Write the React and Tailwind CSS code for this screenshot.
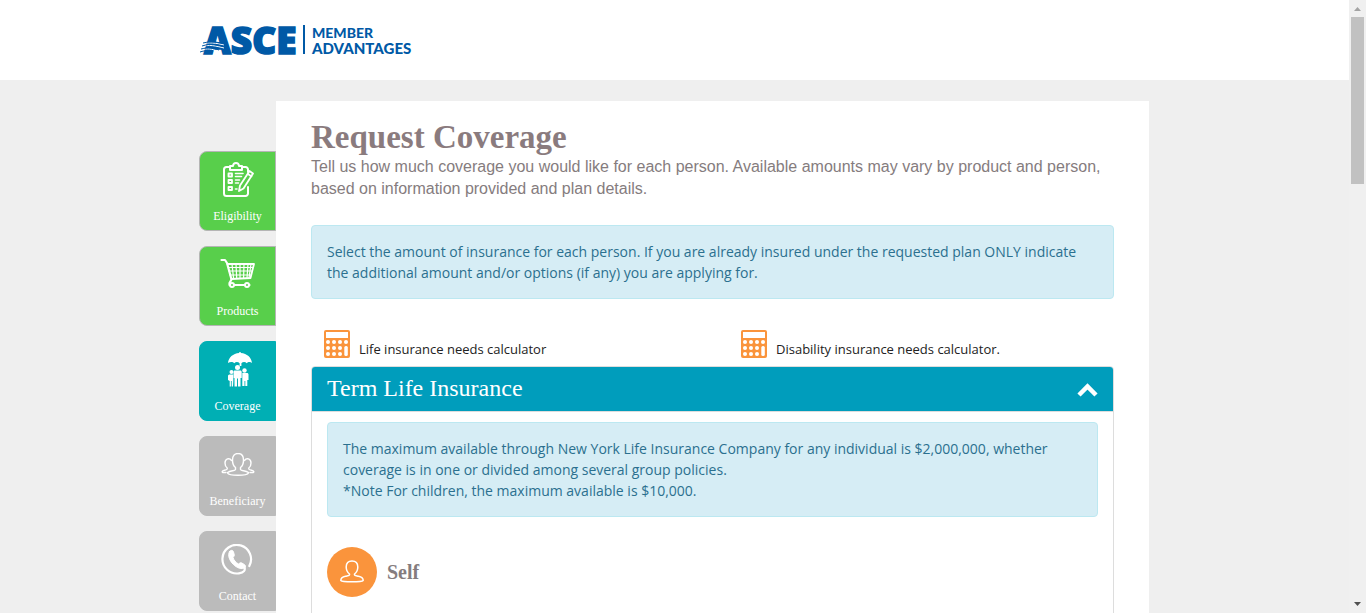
import React from "react";

function Logo() {
  return (
    <a href="#home" aria-label="ASCE Member Advantages" className="block">
      <svg width="220" height="56" viewBox="0 0 220 56" fill="#0059a6" className="block">
        <text x="5" y="43" fontFamily="'Open Sans', sans-serif" fontWeight="800" fontSize="37" stroke="#0059a6" strokeWidth="1.600">ASCE</text>
        <g fill="none" stroke="#fff" strokeWidth="1">
          <path d="M1 33c9-2 16-1 24 1" />
          <path d="M1 36c9-3 16-1 24 1" />
          <path d="M1 39c8-2 12-1 17 1" />
        </g>
        <g fill="none" stroke="#0059a6" strokeWidth="1">
          <path d="M4 32c9-2 14-1 22 1" />
          <path d="M3 35c9-3 16-1 24 1" />
          <path d="M2 38c8-2 12-1 18 1" />
          <path d="M1 41c6-2 8-1 12 1" />
        </g>
        <path d="M104 14h2v29h-2z" />
        <text x="113" y="27" fontFamily="Lato, sans-serif" fontWeight="900" fontSize="14">MEMBER</text>
        <text x="113" y="43" fontFamily="Lato, sans-serif" fontWeight="900" fontSize="15">ADVANTAGES</text>
      </svg>
    </a>
  );
}

function EligibilityIcon() {
  return (
    <svg width="32" height="36" viewBox="0 1 32 36" fill="none" stroke="#fff" strokeWidth="2" strokeLinejoin="round" strokeLinecap="round">
      <path d="M8 6H4.500A2.500 2.500 0 0 0 2 8.500V32.500A2.500 2.500 0 0 0 4.500 35h19a2.500 2.500 0 0 0 2.500-2.500V26M20 6h3.500A2.500 2.500 0 0 1 26 8.500V11" />
      <path d="M8 9V5h3c.3-4 5.700-4 6 0h3v4z" />
      <path d="M6.500 12.500h3.500v3h-3.500zM6.500 19h3.500v3h-3.500zM6.500 26h3.500v3h-3.500z" strokeWidth="1.800" />
      <path d="M13.500 12.500h7.500M13.500 15.500h6M13.500 19h4M13.500 22h3M13.500 28h1.500" strokeWidth="1.600" />
      <path d="m17 30 1-5.500L27.500 10l3.500 2.500L21.500 27.500zM26 13l3.500 2.500" strokeWidth="1.800" />
    </svg>
  );
}

function ProductsIcon() {
  return (
    <svg width="36" height="34" viewBox="0 0 36 34" fill="none" stroke="#fff" strokeLinecap="round" strokeLinejoin="round">
      <path d="M1.500 2H5l2 3 4.500 16.500-2 3.500v2h20" strokeWidth="2.200" />
      <path d="M7.500 6H34l-3.500 14-19 1" strokeWidth="1.800" />
      <path d="M8.500 9.500h24.500M9 13h23M10 17h21.500" strokeWidth="1.200" />
      <path d="M12 6l1.500 14M16 6l.7 14M20 6v14M24 6l-.4 14M28 6l-1 14M31 6l-2 14" strokeWidth="1.200" />
      <g fill="#58cf4b" strokeWidth="2"><circle cx="12" cy="27" r="2" /><circle cx="27" cy="27" r="2" /></g>
    </svg>
  );
}

function CoverageIcon() {
  return (
    <svg width="30" height="36" viewBox="-4 1 30 36" fill="#fff">
      <path d="M12.200 2c0-2 1.600-2 1.600 0C20 2.400 24.500 6.500 25 12c-1.300-1.400-4-1.400-5.300.2-1.300-1.500-4-1.500-5.300 0V15h-1.800v-2.800c-1.400-1.500-4-1.500-5.300 0C6 10.600 3 10.600 1 12 1.500 6.500 6 2.400 12.200 2z" />
      <circle cx="10.500" cy="16.500" r="2.500" /><circle cx="4.500" cy="21" r="2" /><circle cx="17.500" cy="19.500" r="2.200" />
      <path d="M7.800 19.500h5.400c1 0 1.500.6 1.500 1.500v6h-1.200v8.500H11V27.500h-1v8H7.500V27h-.9v-6c0-.9.300-1.500 1.200-1.500z" />
      <path d="M3 23.500h3.300V30l-.3 5.500H4.700V30h-.8v5.500H2.700V30L1 29v-4c0-1 .8-1.500 2-1.500zM15.300 22h4.500c1.200 0 1.700.6 1.700 1.500V29h-1.200v6h-2v-5h-.8v5h-2.200z" />
    </svg>
  );
}

function BeneficiaryIcon() {
  return (
    <svg width="34" height="24" viewBox="0 1 34 24" fill="none" stroke="#fff" strokeWidth="1.400" strokeLinecap="round" strokeLinejoin="round">
      <path d="M14.500 15.500C12.500 14 11.500 11 11.500 8c0-4 2-6.500 5.500-6.500S22.500 4 22.500 8c0 3-1 6-3 7.500v2c0 .6 1.500 1 4 1.500 2.500.5 4 1.200 4 2-1.500 3-19.500 3-21 0 0-.8 1.500-1.500 4-2s4-.9 4-1.500z" />
      <path d="M10.500 8.500C8.500 5.500 4 6.500 4 11c0 2.200.8 4 2.200 5v1c0 .5-1 .8-2.700 1.200C.7 19 .7 20 2 20.500h3M23.500 8.500c2-3 6.500-2 6.500 2.500 0 2.200-.8 4-2.200 5v1c0 .5 1 .8 2.700 1.200 2.800.8 2.800 1.800 1.500 2.300h-3" />
    </svg>
  );
}

function ContactIcon() {
  return (
    <svg width="34" height="32" viewBox="0 1 34 32" fill="none" stroke="#fff" strokeLinecap="round">
      <path d="M28.300 23A14.300 14.300 0 1 0 18 30.300c5-.5 6.500-3 5.500-6.500" strokeWidth="2.200" />
      <path d="M8.500 8.500c1.500-1.800 3.500-1.500 4 .5l.8 2.800c.3 1.200-.8 2-1.300 2.700.8 2.700 2.800 5 5.500 6.500 1-.8 2-1.700 3.300-1l2.500 1.500c1.500 1 1.500 2 .5 3.200C18 29 4 17 8.500 8.500z" fill="#fff" strokeWidth="1" />
    </svg>
  );
}

function CalculatorIcon() {
  return (
    <svg width="26" height="28" viewBox="0 0 26 28" className="shrink-0">
      <rect width="26" height="28" rx="2" fill="#fa943c" />
      <path d="M2 2h22v6H2z" fill="#fff" />
      <g fill="#fff">
        {[12, 18, 24].map((y) => [4, 10, 16].map((x) => <circle key={x + "-" + y} cx={x} cy={y} r="2" />))}
        <circle cx="22" cy="12" r="2" />
        <rect x="20.300" y="16" width="3.500" height="10" rx="1.500" />
      </g>
    </svg>
  );
}

function PersonIcon() {
  return (
    <svg width="24" height="25" viewBox="0 0 24 25" fill="none" stroke="#fff" strokeWidth="1.500" strokeLinejoin="round">
      <path d="M9.500 14C7.500 12.500 6.200 10 6.200 7 6.200 3 8.500 1 12 1s5.800 2 5.800 6c0 3-1.300 5.500-3.300 7v1c0 .7 2 .8 4 1.200 2.800.6 4.700 2.300 4.700 4.300-1.700 1.800-20.700 1.800-22.400 0 0-2 1.900-3.700 4.700-4.300 2-.4 4-.5 4-1.200z" />
    </svg>
  );
}

const steps = [
  { label: "Eligibility", Icon: EligibilityIcon, look: "bg-[#58cf4b] border-[#b5b5b5]" },
  { label: "Products", Icon: ProductsIcon, look: "bg-[#58cf4b] border-[#b5b5b5]" },
  { label: "Coverage", Icon: CoverageIcon, look: "bg-[#00afb4] border-[#00afb4]" },
  { label: "Beneficiary", Icon: BeneficiaryIcon, look: "bg-[#bbbbbb] border-[#bbbbbb]" },
  { label: "Contact", Icon: ContactIcon, look: "bg-[#bbbbbb] border-[#bbbbbb]" },
];

function Steps() {
  return (
    <nav aria-label="Application steps" className="flex w-[77px] shrink-0 flex-col gap-[15px] pt-[50px]">
      {steps.map(({ label, Icon, look }) => (
        <a key={label} href={"#" + label.toLowerCase()} className={"flex h-20 flex-col items-center rounded-l-lg border text-white " + look}>
          <span className="flex h-14 items-center justify-center"><Icon /></span>
          <span className="font-['Liberation_Serif',serif] text-[12px] leading-4">{label}</span>
        </a>
      ))}
    </nav>
  );
}

function Notice({ children }) {
  return (
    <div className="rounded-[4px] border border-[#bce8f1] bg-[#d6edf5] p-[15px] font-['Open_Sans',sans-serif] text-[14px] leading-[21px] text-[#2b708f]">
      {children}
    </div>
  );
}

function CalculatorLink({ children }) {
  return (
    <a href="#calculator" className="flex flex-1 items-end gap-[9px] pl-[13px] font-['Open_Sans',sans-serif] text-[13px] leading-[18px] text-[#222]">
      <CalculatorIcon />
      {children}
    </a>
  );
}

function ScrollBar() {
  return (
    <div aria-hidden="true" className="flex w-[17px] shrink-0 flex-col items-center justify-between bg-[#f0f0f0]">
      <div className="flex flex-col items-center">
        <svg width="17" height="17"><path d="M5 11h7L8.500 7z" fill="#a3a3a3" /></svg>
        <div className="h-[167px] w-[13px] bg-[#c1c1c1]" />
      </div>
      <svg width="17" height="17"><path d="M5 6h7l-3.500 4z" fill="#505050" /></svg>
    </div>
  );
}

export default function App() {
  return (
    <div className="flex h-screen overflow-hidden bg-[#efefef]">
      <div className="min-w-0 flex-1">
        <header className="h-20 bg-white">
          <div className="mx-auto max-w-[951px] pt-[11px]"><Logo /></div>
        </header>
        <div className="mx-auto flex max-w-[951px] pt-[21px] pr-px">
          <Steps />
          <main className="min-h-screen min-w-0 flex-1 bg-white px-[35px] pt-[18px]">
            <h1 className="font-['Liberation_Serif',serif] text-[33px] font-bold leading-[37px] text-[#8a7b7e]">Request Coverage</h1>
            <p className="mb-[25px] font-['Liberation_Sans',sans-serif] text-[16px] leading-[22px] text-[#857c7e]">
              Tell us how much coverage you would like for each person. Available amounts may vary by product and person, based on information provided and plan details.
            </p>
            <Notice>
              Select the amount of insurance for each person. If you are already insured under the requested plan ONLY indicate the additional amount and/or options (if any) you are applying for.
            </Notice>
            <div className="mt-[31px] mb-2 flex gap-[31px]">
              <CalculatorLink>Life insurance needs calculator</CalculatorLink>
              <CalculatorLink>Disability insurance needs calculator.</CalculatorLink>
            </div>
            <section className="rounded-t-[4px] border border-[#ddd]">
              <h2>
                <button type="button" aria-expanded="true" className="flex h-11 w-full items-center justify-between rounded-t-[3px] bg-[#009dbc] px-[15px] pb-0.5 font-['Liberation_Serif',serif] text-[24px] leading-6 text-white">
                  Term Life Insurance
                  <svg width="21" height="14" viewBox="0 0 21 14" fill="none" stroke="#fff" strokeWidth="4.500" className="mt-1"><path d="m2 12 8.500-8.500L19 12" /></svg>
                </button>
              </h2>
              <div className="border-t border-[#ddd] px-[15px] pt-[10px]">
                <Notice>
                  <p>The maximum available through New York Life Insurance Company for any individual is $2,000,000, whether coverage is in one or divided among several group policies.</p>
                  <p>*Note For children, the maximum available is $10,000.</p>
                </Notice>
                <div className="mt-[30px] flex items-center gap-[10px] pb-10">
                  <span className="flex size-[50px] items-center justify-center rounded-full bg-[#fa943c]"><PersonIcon /></span>
                  <h3 className="font-['Liberation_Serif',serif] text-[20px] font-bold leading-6 text-[#857c7e]">Self</h3>
                </div>
              </div>
            </section>
          </main>
        </div>
      </div>
      <ScrollBar />
    </div>
  );
}
